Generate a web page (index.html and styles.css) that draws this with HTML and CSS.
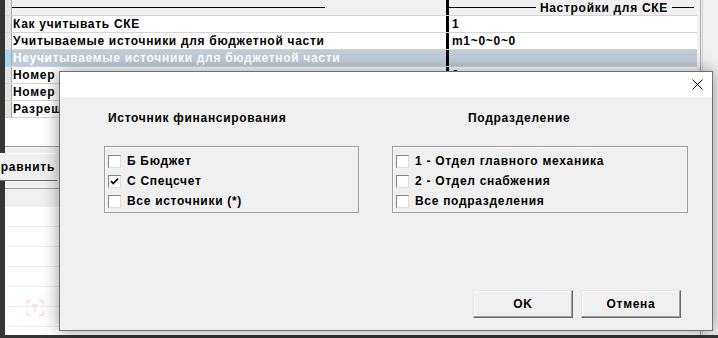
FILE: index.html
```html
<!DOCTYPE html>
<html>
<head>
  <title>Настройки для СКЕ</title>
  <link rel="stylesheet" href="styles.css">
</head>
<body>
  <div class="app">
    <div class="content">
      <div class="grid">
        <div class="row head">
          <div class="mark"></div>
          <div class="cell name"><span class="rule long"></span></div>
          <div class="cell value"><span class="rule"></span><span class="caption">Настройки для СКЕ</span><span class="rule short"></span></div>
        </div>
        <div class="row">
          <div class="mark"></div>
          <div class="cell name">Как учитывать СКЕ</div>
          <div class="cell value">1</div>
        </div>
        <div class="row">
          <div class="mark"></div>
          <div class="cell name">Учитываемые источники для бюджетной части</div>
          <div class="cell value">m1~0~0~0</div>
        </div>
        <div class="row selected">
          <div class="mark"></div>
          <div class="cell name">Неучитываемые источники для бюджетной части</div>
          <div class="cell value"></div>
        </div>
        <div class="row">
          <div class="mark"></div>
          <div class="cell name">Номер</div>
          <div class="cell value">0</div>
        </div>
        <div class="row">
          <div class="mark"></div>
          <div class="cell name">Номер</div>
          <div class="cell value">0</div>
        </div>
        <div class="row">
          <div class="mark"></div>
          <div class="cell name">Разрешить</div>
          <div class="cell value">0</div>
        </div>
      </div>

      <div class="blank"></div>
      <div class="bar">
        <button class="bar-btn">Сравнить</button>
      </div>
      <div class="bar-bottom"></div>
      <div class="list"></div>
    </div>

    <div class="side"><div class="track"></div></div>

    <div class="float-tools">
      <svg width="18" height="16" viewBox="0 0 18 16"><path d="M1 5V1h4M13 1h4v4M17 11v4h-4M5 15H1v-4M6 5h6M9 5v7" fill="none" stroke="#e05a6a" stroke-width="1.4"/></svg>
      <svg width="18" height="16" viewBox="0 0 18 16"><path d="M2 4h3l2-2h4l2 2h3v10H2z" fill="none" stroke="#777" stroke-width="1.3"/><circle cx="9" cy="9" r="3" fill="none" stroke="#777" stroke-width="1.3"/></svg>
      <svg width="6" height="16" viewBox="0 0 6 16"><circle cx="3" cy="3" r="1.4" fill="#777"/><circle cx="3" cy="8" r="1.4" fill="#777"/><circle cx="3" cy="13" r="1.4" fill="#777"/></svg>
    </div>

    <div class="dialog">
      <div class="titlebar">
        <svg class="close" width="11" height="11" viewBox="0 0 11 11"><path d="M0.5 0.5L10.5 10.5M10.5 0.5L0.5 10.5" stroke="#000" stroke-width="1"/></svg>
      </div>
      <div class="dialog-body">
        <div class="columns">
          <div class="group sources">
            <div class="title">Источник финансирования</div>
            <div class="box">
              <label class="check-row"><span class="checkbox"></span>Б Бюджет</label>
              <label class="check-row"><span class="checkbox"><svg width="11" height="11" viewBox="0 0 11 11"><path d="M2 5L4.2 7.6L9 2.6" fill="none" stroke="#000" stroke-width="1.7"/></svg></span>С Спецсчет</label>
              <label class="check-row"><span class="checkbox"></span>Все источники (*)</label>
            </div>
          </div>
          <div class="group units">
            <div class="title">Подразделение</div>
            <div class="box">
              <label class="check-row"><span class="checkbox"></span>1 - Отдел главного механика</label>
              <label class="check-row"><span class="checkbox"></span>2 - Отдел снабжения</label>
              <label class="check-row"><span class="checkbox"></span>Все подразделения</label>
            </div>
          </div>
        </div>
        <div class="footer">
          <button class="btn">OK</button>
          <button class="btn">Отмена</button>
        </div>
      </div>
    </div>
  </div>
</body>
</html>
```

FILE: styles.css
```css
* {
  box-sizing: border-box;
}
body {
  margin: 0;
  width: 718px;
  height: 338px;
  overflow: hidden;
  background: #353535;
  font-family: "Liberation Sans", Arial, sans-serif;
  font-size: 12px;
  font-weight: bold;
  letter-spacing: 0.7px;
  color: #000;
}
.app {
  position: relative;
  height: 335px;
  margin-left: 5px;
  display: flex;
  background: #fff;
}
.content {
  width: 692px;
  display: flex;
  flex-direction: column;
}

/* property grid */
.row {
  display: flex;
  height: 17px;
  border-bottom: 1px solid #d4d4d4;
}
.row.head {
  height: 16px;
  background: #f0f0f0;
}
.mark {
  width: 7px;
  background: #e4e4e4;
  border-right: 1px solid #a8a8a8;
}
.cell {
  line-height: 16px;
  white-space: nowrap;
  overflow: hidden;
}
.name {
  width: 434px;
  padding-left: 1px;
}
.value {
  width: 251px;
  border-left: 3px solid #000;
  padding-left: 3px;
}
.head .name {
  padding: 0;
  display: flex;
  align-items: center;
}
.head .value {
  display: flex;
  align-items: center;
  padding: 0 3px 0 0;
}
.rule {
  flex: 1;
  height: 1px;
  background: #000;
}
.rule.long {
  flex: 0 0 313px;
}
.rule.short {
  flex: 0 0 22px;
}
.caption {
  padding: 0 4px;
}
.row.selected .cell {
  background: #bfcbd7;
  color: #fff;
}
.row.selected .mark {
  background: #a6d6f2;
}

/* area under the grid */
.blank {
  height: 29px;
  border-bottom: 1px solid #a0a0a0;
}
.bar {
  background: #f0f0f0;
  padding: 6px 0 7px;
  border-bottom: 1px solid #a0a0a0;
}
.bar-btn {
  display: block;
  width: 80px;
  height: 28px;
  margin-left: -28px;
  padding: 0 2px 0 0;
  text-align: right;
  font: inherit;
  letter-spacing: inherit;
  background: #f0f0f0;
  border: none;
  border-top: 1px solid #fff;
  border-bottom: 1px solid #696969;
}
.bar-bottom {
  height: 18px;
  background: #f0f0f0;
}
.list {
  flex: 1;
  background: repeating-linear-gradient(to bottom, #fff 0 19px, #ededed 19px 20px);
}
.side {
  width: 21px;
  background: #f0f0f0;
  padding-left: 3px;
  display: flex;
}
.track {
  flex: 1;
  border-left: 1px solid #a9a9a9;
  margin-right: 15px;
  border-right: 1px solid #cfcfcf;
}

.float-tools {
  position: absolute;
  left: 12px;
  top: 292px;
  width: 96px;
  height: 31px;
  border-radius: 8px;
  background: rgba(250, 250, 250, 0.8);
  display: flex;
  align-items: center;
  justify-content: space-around;
  opacity: 0.2;
}

/* modal */
.dialog {
  position: absolute;
  left: 54px;
  top: 71px;
  width: 654px;
  height: 260px;
  background: #f0f0f0;
  border: 1px solid #6f6f6f;
  box-shadow: 0 0 16px rgba(0, 0, 0, 0.4);
  display: flex;
  flex-direction: column;
}
.titlebar {
  height: 25px;
  background: #fff;
  display: flex;
  justify-content: flex-end;
  align-items: center;
  padding-right: 9px;
}
.dialog-body {
  flex: 1;
  display: flex;
  flex-direction: column;
  padding: 14px 24px 12px 44px;
}
.columns {
  display: flex;
  gap: 33px;
}
.sources {
  width: 255px;
}
.units {
  width: 296px;
}
.title {
  height: 14px;
  line-height: 14px;
  margin-bottom: 21px;
  padding-left: 4px;
}
.units .title {
  padding-left: 76px;
}
.box {
  border: 1px solid #a0a0a0;
  box-shadow: inset 1px 1px #fff;
  padding: 4px 3px 1px;
}
.check-row {
  display: flex;
  align-items: center;
  gap: 6px;
  height: 20px;
}
.checkbox {
  width: 13px;
  height: 13px;
  background: #fff;
  border: 1px solid;
  border-color: #828282 #dcdcdc #dcdcdc #828282;
  display: flex;
  align-items: center;
  justify-content: center;
}
.footer {
  margin-top: auto;
  display: flex;
  justify-content: flex-end;
  gap: 8px;
  padding-right: 7px;
}
.btn {
  width: 100px;
  height: 28px;
  font: inherit;
  letter-spacing: inherit;
  background: #f0f0f0;
  border: 1px solid;
  border-color: #e3e3e3 #696969 #696969 #e3e3e3;
  box-shadow: inset -1px -1px #a0a0a0, inset 1px 1px #fff;
  padding: 0;
}
```
